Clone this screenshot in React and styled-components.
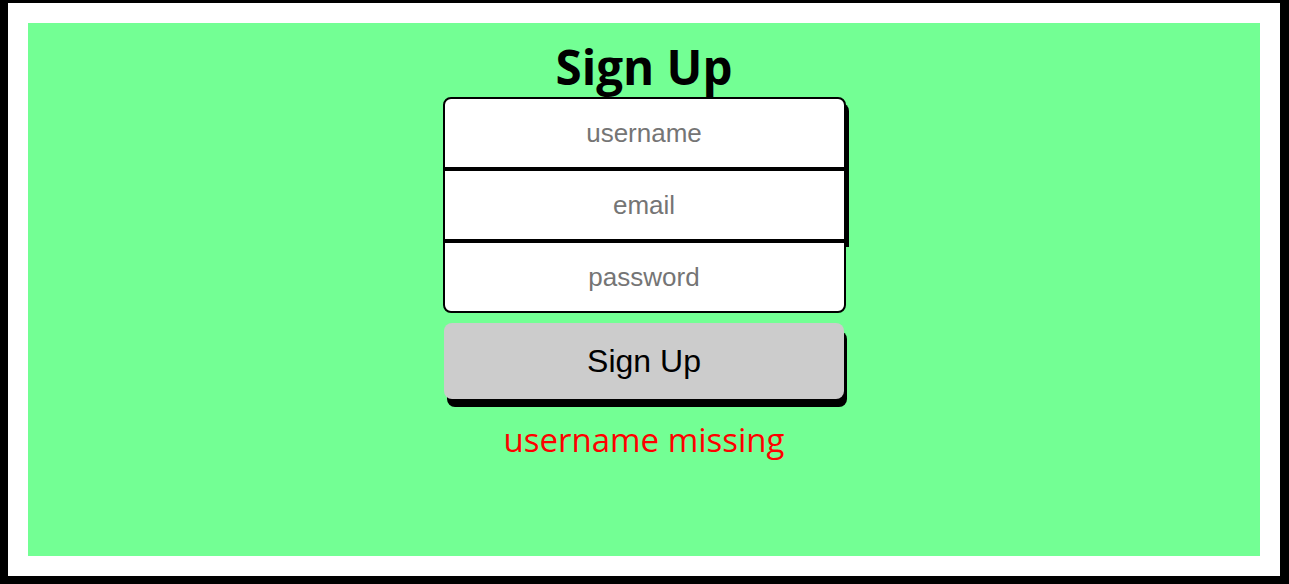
import { useState } from "react";
import styled, { createGlobalStyle } from "styled-components";

const GlobalStyle = createGlobalStyle`
  html, body {
    margin: 0;
    background-color: #000;
  }

  * {
    box-sizing: border-box;
  }
`;

const Frame = styled.div`
  margin: 3px 9px 8px 8px;
  height: 573px;
  padding: 20px;
  background-color: #fff;
`;

const Stage = styled.main`
  height: 100%;
  background-color: #73ff94;
  display: flex;
  flex-direction: column;
  align-items: center;
  padding-top: 16px;
`;

const Title = styled.h1`
  margin: 0 0 2px;
  font-family: "Open Sans", "Noto Sans", sans-serif;
  font-weight: 700;
  font-size: 47.5px;
  line-height: 56px;
  color: #000;
`;

const Fields = styled.div`
  display: flex;
  flex-direction: column;
  width: 403px;
`;

const Field = styled.input`
  width: 100%;
  height: 72px;
  border: 2px solid #000;
  border-radius: ${(p) =>
    p.$first ? "8px 8px 0 0" : p.$last ? "0 0 8px 8px" : "0"};
  box-shadow: ${(p) => (p.$flat ? "none" : "3px 6px 0 #000")};
  background-color: #fff;
  font-family: "Liberation Sans", Arial, sans-serif;
  font-size: 26px;
  text-align: center;
  color: #000;
  outline: none;

  &::placeholder {
    color: #757575;
  }
`;

const SubmitButton = styled.button`
  margin-top: 10px;
  width: 400px;
  height: 76px;
  border: none;
  border-radius: 8px;
  background-color: #cccccc;
  box-shadow: 3px 8px 0 #000;
  font-family: "Liberation Sans", Arial, sans-serif;
  font-size: 32px;
  color: #000;
  cursor: pointer;
`;

const ErrorText = styled.p`
  margin: 18px 0 0;
  font-family: "Open Sans", "Noto Sans", sans-serif;
  font-size: 33px;
  color: #ff0000;
`;

const App = () => {
  const [username, setUsername] = useState("");
  const [email, setEmail] = useState("");
  const [password, setPassword] = useState("");

  return (
    <>
      <GlobalStyle />
      <Frame>
        <Stage>
          <Title>Sign Up</Title>
          <Fields>
            <Field
              $first
              type="text"
              placeholder="username"
              value={username}
              onChange={(e) => setUsername(e.target.value)}
            />
            <Field
              type="email"
              placeholder="email"
              value={email}
              onChange={(e) => setEmail(e.target.value)}
            />
            <Field
              $last
              $flat
              type="password"
              placeholder="password"
              value={password}
              onChange={(e) => setPassword(e.target.value)}
            />
          </Fields>
          <SubmitButton type="button">Sign Up</SubmitButton>
          <ErrorText>username missing</ErrorText>
        </Stage>
      </Frame>
    </>
  );
};

export default App;
